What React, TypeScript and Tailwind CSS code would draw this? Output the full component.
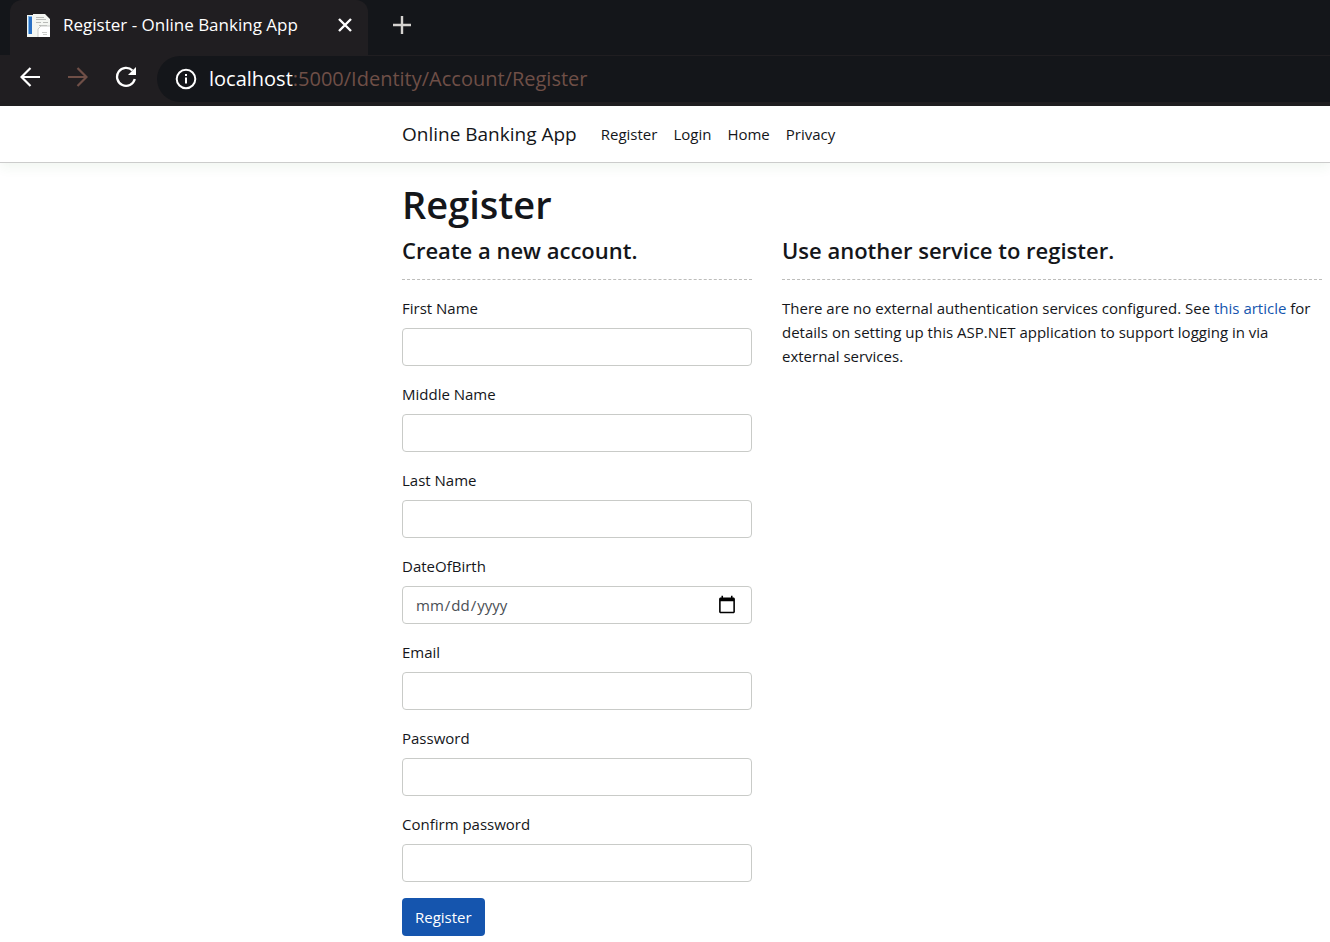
import type { ReactNode } from "react";

const fields = [
  { id: "first-name", label: "First Name", type: "text" },
  { id: "middle-name", label: "Middle Name", type: "text" },
  { id: "last-name", label: "Last Name", type: "text" },
  { id: "date-of-birth", label: "DateOfBirth", type: "date" },
  { id: "email", label: "Email", type: "email" },
  { id: "password", label: "Password", type: "password" },
  { id: "confirm-password", label: "Confirm password", type: "password" },
];

function FaviconIcon() {
  return (
    <svg width="24" height="25" viewBox="0 0 24 25" aria-hidden="true">
      <path d="M0 2h6V1h12l5 5v18H0z" fill="#f4f6f2" />
      <path d="M1 3h4v18H1z" fill="#7fb8ea" />
      <path d="M2 4h3v17H2z" fill="#2a70c4" />
      <path d="M9 4h8v1H9zM9 6h10v1H9zM9 9h5v1H9zM16 9h5v1h-5zM12 12h8v1h-8z" fill="#b9bbb8" />
      <path d="M11 16l3-3h9v11H11z" fill="#fff" />
      <path d="M11 24v-8l3-3h9" fill="none" stroke="#c9cbc8" />
      <path d="M15 19h5v1h-5zM16 21h4v1h-4z" fill="#c9cbc8" />
    </svg>
  );
}

function IconButton({ label, children }: { label: string; children: ReactNode }) {
  return (
    <button type="button" aria-label={label} className="flex size-6 items-center justify-center">
      {children}
    </button>
  );
}

function BrowserBar() {
  return (
    <div className="bg-[#14161a] text-white">
      <div className="flex items-start pl-[10px]">
        <div className="flex h-[55px] w-[358px] items-start rounded-t-xl bg-[#201e21] pt-[13px] pr-[11px] pl-[17px]">
          <FaviconIcon />
          <span className="ml-3 flex-1 text-[17px] leading-6 whitespace-nowrap">
            Register - Online Banking App
          </span>
          <IconButton label="Close tab">
            <svg width="14" height="14" viewBox="0 0 14 14" stroke="#fff" strokeWidth="2.4" aria-hidden="true">
              <path d="M1 1l12 12M13 1L1 13" />
            </svg>
          </IconButton>
        </div>
        <div className="ml-[22px] pt-[13px]">
          <IconButton label="New tab">
            <svg width="18" height="18" viewBox="0 0 18 18" stroke="#d5d3d0" strokeWidth="2.4" aria-hidden="true">
              <path d="M9 0v18M0 9h18" />
            </svg>
          </IconButton>
        </div>
      </div>
      <div className="flex items-start bg-[#201e21] pt-px pb-1 pl-[18px]">
        <div className="flex gap-6 pt-[9px]">
          <IconButton label="Back">
            <svg width="20" height="20" viewBox="0 0 20 20" fill="none" stroke="#fff" strokeWidth="2.2" aria-hidden="true">
              <path d="M20 10H2M10.5 1L1.5 10l9 9" />
            </svg>
          </IconButton>
          <IconButton label="Forward">
            <svg width="20" height="20" viewBox="0 0 20 20" fill="none" stroke="#6f4f47" strokeWidth="2.2" aria-hidden="true">
              <path d="M0 10h18M9.5 1l9 9-9 9" />
            </svg>
          </IconButton>
          <IconButton label="Reload">
            <svg width="22" height="22" viewBox="0 0 22 22" fill="none" aria-hidden="true">
              <path d="M17.5 4.5A9 9 0 1 0 19.8 13" stroke="#fff" strokeWidth="2.3" />
              <path d="M21 1v8h-8z" fill="#fff" />
            </svg>
          </IconButton>
        </div>
        <div className="ml-[19px] flex h-[46px] flex-1 items-center rounded-l-full bg-[#14161a] pl-[18px]">
          <svg width="22" height="22" viewBox="0 0 22 22" fill="none" aria-hidden="true">
            <circle cx="11" cy="11" r="9.3" stroke="#fff" strokeWidth="2" />
            <path d="M11 9.5v6M11 6v2" stroke="#fff" strokeWidth="2" />
          </svg>
          <span className="ml-3 text-[20px] leading-6 whitespace-nowrap">
            localhost<span className="text-[#6f4f47]">:5000/Identity/Account/Register</span>
          </span>
        </div>
      </div>
    </div>
  );
}

export default function App() {
  return (
    <div className="bg-white font-['Open_Sans',sans-serif] text-[15px] leading-6 text-[#14161a]">
      <BrowserBar />
      <header className="border-b border-[#cccccc] shadow-[0_4px_12px_rgba(40,110,40,0.07)]">
        <nav className="flex h-14 items-center pl-[402px]">
          <a href="#home" className="mr-6 text-[19px]">
            Online Banking App
          </a>
          <div className="flex gap-4">
            <a href="#register">Register</a>
            <a href="#login">Login</a>
            <a href="#home">Home</a>
            <a href="#privacy">Privacy</a>
          </div>
        </nav>
      </header>
      <main className="pt-[17px] pr-2 pb-[6px] pl-[402px]">
        <h1 className="mb-2 text-[38px] leading-12 font-semibold">Register</h1>
        <div className="flex gap-[30px]">
          <form className="w-[350px] shrink-0" onSubmit={(e) => e.preventDefault()}>
            <h2 className="text-[22px] leading-7 font-semibold">Create a new account.</h2>
            <hr className="mt-[15px] mb-4 border-dashed border-[#bdbdbb]" />
            {fields.map((f) => (
              <div key={f.id} className="mb-4">
                <label htmlFor={f.id} className="mb-2 block">
                  {f.label}
                </label>
                <input
                  id={f.id}
                  type={f.type}
                  className="block h-[38px] w-full rounded-[4px] border border-[#c9cbc8] bg-white px-3 text-[#4a4f55] [&::-webkit-calendar-picker-indicator]:mr-[2px] [&::-webkit-calendar-picker-indicator]:size-5 [&::-webkit-calendar-picker-indicator]:p-0"
                />
              </div>
            ))}
            <button type="submit" className="h-[38px] rounded-[4px] bg-[#1555ae] px-[13px] text-white">
              Register
            </button>
          </form>
          <section className="max-w-[540px] flex-1">
            <h2 className="text-[22px] leading-7 font-semibold">Use another service to register.</h2>
            <hr className="mt-[15px] mb-4 border-dashed border-[#bdbdbb]" />
            <p>
              There are no external authentication services configured. See{" "}
              <a href="#article" className="text-[#1555ae]">
                this article
              </a>{" "}
              for details on setting up this ASP.NET application to support logging in via external services.
            </p>
          </section>
        </div>
      </main>
    </div>
  );
}
